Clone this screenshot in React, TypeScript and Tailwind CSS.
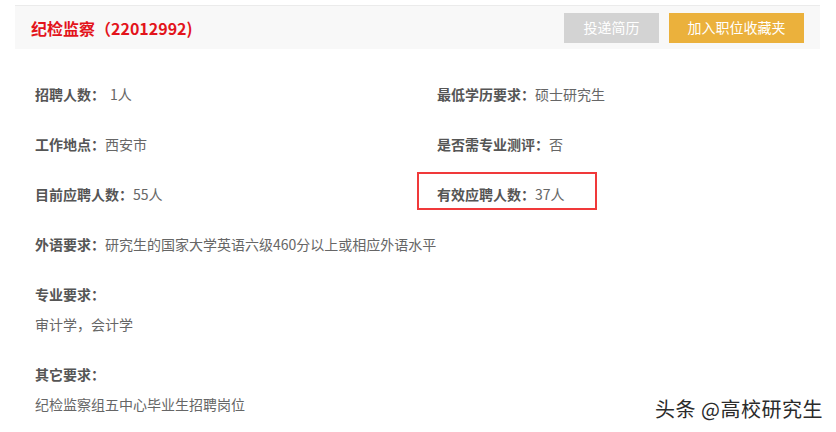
const cjk = '[font-family:"Noto_Sans_CJK_SC","Microsoft_YaHei",sans-serif]';

type tRowProps = {
  label: string;
  value: string;
  boxed?: boolean;
  indent?: boolean;
};

function Field({ label, value, boxed, indent }: tRowProps) {
  return (
    <div className="relative flex h-[50px] items-center text-[14px]">
      <span className="font-bold text-[#555555]">{label}</span>
      <span className={indent ? 'ml-[5px] text-[#666666]' : 'text-[#666666]'}>{value}</span>
      {boxed && (
        <div className="absolute left-[-20px] top-[3px] h-[38px] w-[180px] border-2 border-[#f0393a]" />
      )}
    </div>
  );
}

export default function App() {
  return (
    <div className={`relative h-[432px] w-[836px] overflow-hidden bg-white ${cjk}`}>
      <div className="ml-[15px] mt-[5px] flex h-[44px] w-[805px] items-center justify-between border-t border-[#ebebeb] bg-[#f8f8f8] pl-[16px] pr-[16px]">
        <h1 className="text-[16px] font-bold text-[#e3141b]">纪检监察（22012992)</h1>
        <div className="flex gap-[10px]">
          <button
            type="button"
            className="h-[30px] w-[95px] bg-[#d3d3d3] text-[14px] text-white"
          >
            投递简历
          </button>
          <button
            type="button"
            className="h-[30px] w-[135px] bg-[#ebb13c] text-[14px] text-white"
          >
            加入职位收藏夹
          </button>
        </div>
      </div>

      <div className="ml-[35px] mt-[20px]">
        <div className="grid grid-cols-[402px_1fr]">
          <Field label="招聘人数：" value="1人" indent />
          <Field label="最低学历要求：" value="硕士研究生" />
          <Field label="工作地点：" value="西安市" />
          <Field label="是否需专业测评：" value="否" />
          <Field label="目前应聘人数：" value="55人" />
          <Field label="有效应聘人数：" value="37人" boxed />
        </div>
        <Field label="外语要求：" value="研究生的国家大学英语六级460分以上或相应外语水平" />

        <div className="mt-[10px] text-[14px] leading-[30px]">
          <div className="font-bold text-[#555555]">专业要求：</div>
          <div className="text-[#666666]">审计学，会计学</div>
        </div>
        <div className="mt-[20px] text-[14px] leading-[30px]">
          <div className="font-bold text-[#555555]">其它要求：</div>
          <div className="text-[#666666]">纪检监察组五中心毕业生招聘岗位</div>
        </div>
      </div>

      <div className="absolute bottom-[13px] right-[13px] text-[20px] leading-none tracking-[0.5px] text-[#2b2b2b] [text-shadow:0_0_2px_#ffffff]">
        头条 @高校研究生
      </div>
    </div>
  );
}
